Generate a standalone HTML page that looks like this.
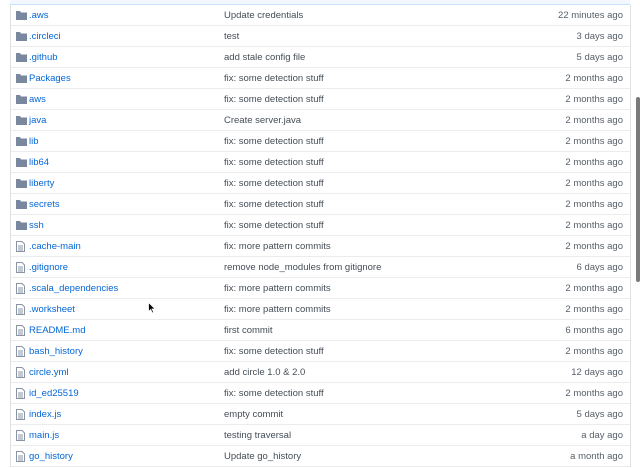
<!DOCTYPE html><html><head><style>
body{margin:0;width:640px;height:454px;overflow:hidden;background:#fff;font-family:"Liberation Sans",sans-serif;font-size:9.5px;position:relative}
.top{position:absolute;left:10px;top:0;width:620px;height:4px;background:#f1f8ff;border-bottom:1px solid #c8e1ff}
.tbl{position:absolute;left:10px;top:5px;width:619px;border-left:1px solid #dfe2e5;border-right:1px solid #dfe2e5}
.r{height:20px;border-bottom:1px solid #eaecef;position:relative;line-height:22px}
.r svg{position:absolute;left:5px;top:6px}
.n{position:absolute;left:18px;color:#0366d6}
.m{position:absolute;left:213px;color:#444d56}
.a{position:absolute;right:7px;color:#586069}
.sb{position:absolute;left:636px;top:97px;width:4px;height:185px;background:#7a7a7a;border-radius:2px}
</style></head><body>
<div class="top"></div>
<div class="tbl">
<div class="r"><svg width="11" height="9"><path d="M0 0h4l1 1.5h6V9H0z" fill="#79889e"/></svg><span class="n">.aws</span><span class="m">Update credentials</span><span class="a">22 minutes ago</span></div>
<div class="r"><svg width="11" height="9"><path d="M0 0h4l1 1.5h6V9H0z" fill="#79889e"/></svg><span class="n">.circleci</span><span class="m">test</span><span class="a">3 days ago</span></div>
<div class="r"><svg width="11" height="9"><path d="M0 0h4l1 1.5h6V9H0z" fill="#79889e"/></svg><span class="n">.github</span><span class="m">add stale config file</span><span class="a">5 days ago</span></div>
<div class="r"><svg width="11" height="9"><path d="M0 0h4l1 1.5h6V9H0z" fill="#79889e"/></svg><span class="n">Packages</span><span class="m">fix: some detection stuff</span><span class="a">2 months ago</span></div>
<div class="r"><svg width="11" height="9"><path d="M0 0h4l1 1.5h6V9H0z" fill="#79889e"/></svg><span class="n">aws</span><span class="m">fix: some detection stuff</span><span class="a">2 months ago</span></div>
<div class="r"><svg width="11" height="9"><path d="M0 0h4l1 1.5h6V9H0z" fill="#79889e"/></svg><span class="n">java</span><span class="m">Create server.java</span><span class="a">2 months ago</span></div>
<div class="r"><svg width="11" height="9"><path d="M0 0h4l1 1.5h6V9H0z" fill="#79889e"/></svg><span class="n">lib</span><span class="m">fix: some detection stuff</span><span class="a">2 months ago</span></div>
<div class="r"><svg width="11" height="9"><path d="M0 0h4l1 1.5h6V9H0z" fill="#79889e"/></svg><span class="n">lib64</span><span class="m">fix: some detection stuff</span><span class="a">2 months ago</span></div>
<div class="r"><svg width="11" height="9"><path d="M0 0h4l1 1.5h6V9H0z" fill="#79889e"/></svg><span class="n">liberty</span><span class="m">fix: some detection stuff</span><span class="a">2 months ago</span></div>
<div class="r"><svg width="11" height="9"><path d="M0 0h4l1 1.5h6V9H0z" fill="#79889e"/></svg><span class="n">secrets</span><span class="m">fix: some detection stuff</span><span class="a">2 months ago</span></div>
<div class="r"><svg width="11" height="9"><path d="M0 0h4l1 1.5h6V9H0z" fill="#79889e"/></svg><span class="n">ssh</span><span class="m">fix: some detection stuff</span><span class="a">2 months ago</span></div>
<div class="r"><svg width="9" height="11" style="top:5px"><path d="M.5.5h5.5l2.5 2.5v7.5h-8z M2 5h5M2 7h5M2 9h5" fill="none" stroke="#8a94a3"/></svg><span class="n">.cache-main</span><span class="m">fix: more pattern commits</span><span class="a">2 months ago</span></div>
<div class="r"><svg width="9" height="11" style="top:5px"><path d="M.5.5h5.5l2.5 2.5v7.5h-8z M2 5h5M2 7h5M2 9h5" fill="none" stroke="#8a94a3"/></svg><span class="n">.gitignore</span><span class="m">remove node_modules from gitignore</span><span class="a">6 days ago</span></div>
<div class="r"><svg width="9" height="11" style="top:5px"><path d="M.5.5h5.5l2.5 2.5v7.5h-8z M2 5h5M2 7h5M2 9h5" fill="none" stroke="#8a94a3"/></svg><span class="n">.scala_dependencies</span><span class="m">fix: more pattern commits</span><span class="a">2 months ago</span></div>
<div class="r"><svg width="9" height="11" style="top:5px"><path d="M.5.5h5.5l2.5 2.5v7.5h-8z M2 5h5M2 7h5M2 9h5" fill="none" stroke="#8a94a3"/></svg><span class="n">.worksheet</span><span class="m">fix: more pattern commits</span><span class="a">2 months ago</span></div>
<div class="r"><svg width="9" height="11" style="top:5px"><path d="M.5.5h5.5l2.5 2.5v7.5h-8z M2 5h5M2 7h5M2 9h5" fill="none" stroke="#8a94a3"/></svg><span class="n">README.md</span><span class="m">first commit</span><span class="a">6 months ago</span></div>
<div class="r"><svg width="9" height="11" style="top:5px"><path d="M.5.5h5.5l2.5 2.5v7.5h-8z M2 5h5M2 7h5M2 9h5" fill="none" stroke="#8a94a3"/></svg><span class="n">bash_history</span><span class="m">fix: some detection stuff</span><span class="a">2 months ago</span></div>
<div class="r"><svg width="9" height="11" style="top:5px"><path d="M.5.5h5.5l2.5 2.5v7.5h-8z M2 5h5M2 7h5M2 9h5" fill="none" stroke="#8a94a3"/></svg><span class="n">circle.yml</span><span class="m">add circle 1.0 &amp; 2.0</span><span class="a">12 days ago</span></div>
<div class="r"><svg width="9" height="11" style="top:5px"><path d="M.5.5h5.5l2.5 2.5v7.5h-8z M2 5h5M2 7h5M2 9h5" fill="none" stroke="#8a94a3"/></svg><span class="n">id_ed25519</span><span class="m">fix: some detection stuff</span><span class="a">2 months ago</span></div>
<div class="r"><svg width="9" height="11" style="top:5px"><path d="M.5.5h5.5l2.5 2.5v7.5h-8z M2 5h5M2 7h5M2 9h5" fill="none" stroke="#8a94a3"/></svg><span class="n">index.js</span><span class="m">empty commit</span><span class="a">5 days ago</span></div>
<div class="r"><svg width="9" height="11" style="top:5px"><path d="M.5.5h5.5l2.5 2.5v7.5h-8z M2 5h5M2 7h5M2 9h5" fill="none" stroke="#8a94a3"/></svg><span class="n">main.js</span><span class="m">testing traversal</span><span class="a">a day ago</span></div>
<div class="r"><svg width="9" height="11" style="top:5px"><path d="M.5.5h5.5l2.5 2.5v7.5h-8z M2 5h5M2 7h5M2 9h5" fill="none" stroke="#8a94a3"/></svg><span class="n">go_history</span><span class="m">Update go_history</span><span class="a">a month ago</span></div>
</div>
<svg style="position:absolute;left:148px;top:302px" width="8" height="12"><path d="M.5.5v9l2.2-2 1.6 3.5 1.4-.6-1.6-3.4h3z" fill="#000" stroke="#fff" stroke-width=".8"/></svg>
<div class="sb"></div>
</body></html>
